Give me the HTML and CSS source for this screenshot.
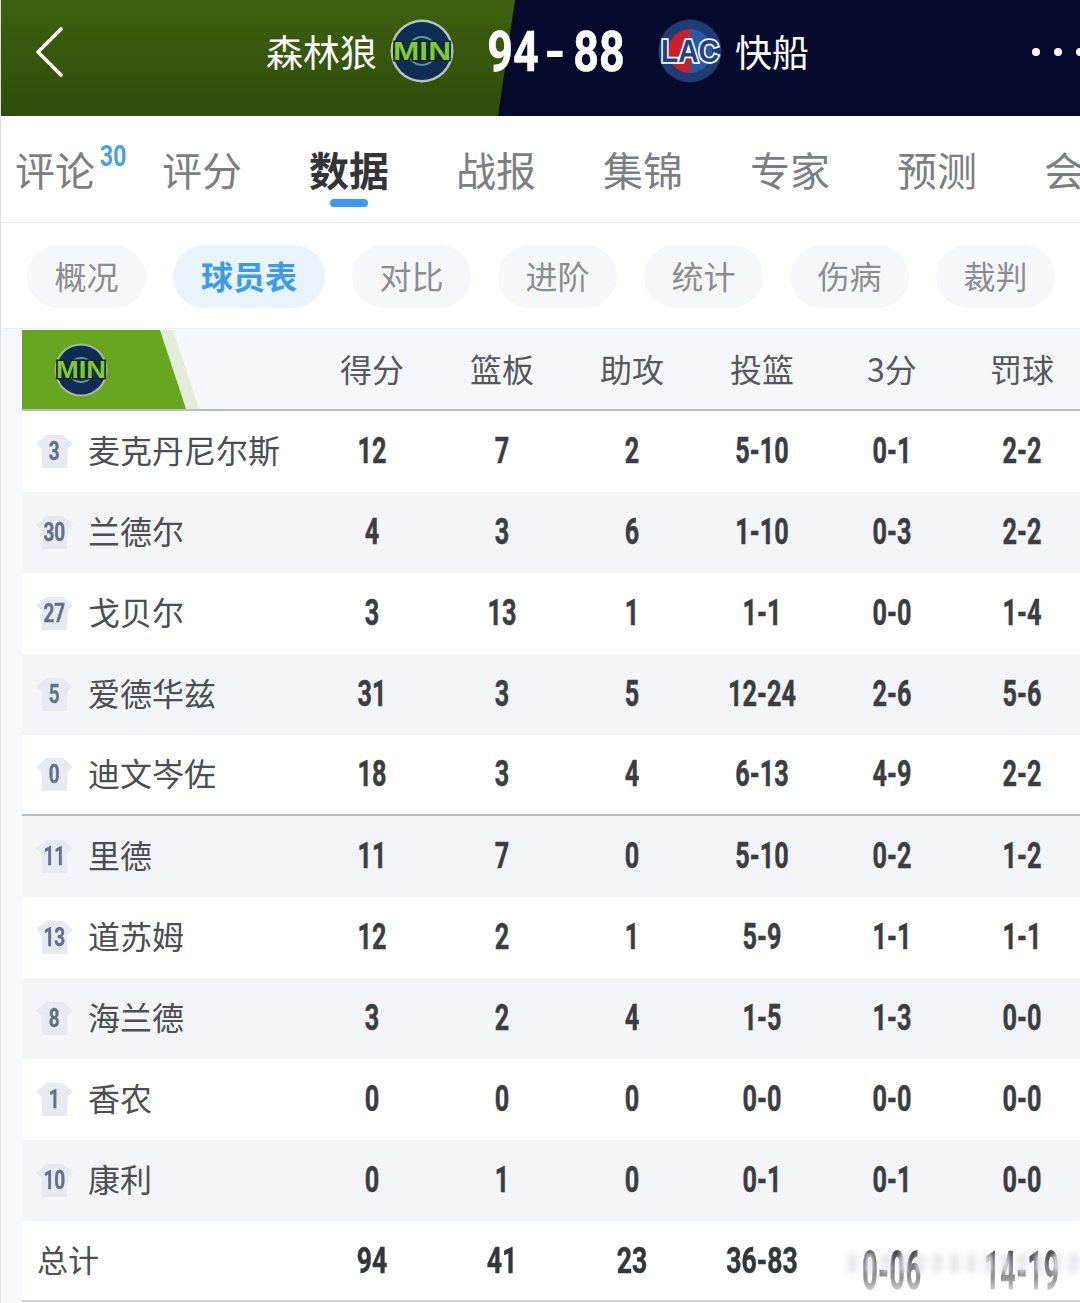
FILE: index.html
```html
<!DOCTYPE html>
<html lang="zh">
<head>
<meta charset="utf-8">
<title>森林狼 94-88 快船</title>
<link rel="stylesheet" href="styles.css">
</head>
<body>
<div class="page">
  <header class="hero">
    <svg class="back" viewBox="0 0 28 50" width="28" height="50"><path d="M26 2 L3 25 L26 48" fill="none" stroke="#fff" stroke-width="3.6" stroke-linecap="round" stroke-linejoin="round"/></svg>
    <span class="team team-home">森林狼</span>
    <svg class="logo logo-home" viewBox="0 0 64 64" width="64" height="64">
      <circle cx="32" cy="32" r="31.5" fill="#b9c3bd"/><circle cx="32" cy="32" r="29" fill="#0e2d55"/><circle cx="32" cy="32" r="14" fill="none" stroke="#5d9aa0" stroke-width="2"/>
      <text x="32" y="41" text-anchor="middle" textLength="58" lengthAdjust="spacingAndGlyphs" class="logo-min">MIN</text>
    </svg>
    <div class="score"><span class="digits">94</span><span class="dash">-</span><span class="digits">88</span></div>
    <svg class="logo logo-away" viewBox="0 0 64 64" width="64" height="64">
      <circle cx="32" cy="32" r="31.5" fill="#1f3c74"/><path d="M32 10 A22 22 0 0 0 32 54Z" fill="#c8202f"/><path d="M32 10 A22 22 0 0 1 32 54Z" fill="#2b5aa5"/>
      <text x="32" y="43" text-anchor="middle" textLength="58" lengthAdjust="spacingAndGlyphs" class="logo-lac">LAC</text>
    </svg>
    <span class="team team-away">快船</span>
    <div class="dots"><i></i><i></i><i></i></div>
  </header>

  <nav class="tabs">
    <span class="tab tab-sup">评论<sup class="count">30</sup></span>
    <span class="tab">评分</span>
    <span class="tab tab-on">数据</span>
    <span class="tab">战报</span>
    <span class="tab">集锦</span>
    <span class="tab">专家</span>
    <span class="tab">预测</span>
    <span class="tab">会员</span>
  </nav>

  <nav class="pills">
    <span class="pill">概况</span>
    <span class="pill pill-on">球员表</span>
    <span class="pill">对比</span>
    <span class="pill">进阶</span>
    <span class="pill">统计</span>
    <span class="pill">伤病</span>
    <span class="pill">裁判</span>
  </nav>

  <section class="board">
    <div class="row head">
      <div class="flag">
        <svg viewBox="0 0 54 54" width="54" height="54">
          <circle cx="27" cy="27" r="26.5" fill="#a9bca0"/><circle cx="27" cy="27" r="24.5" fill="#0e2d55"/><circle cx="27" cy="27" r="12" fill="none" stroke="#5d9aa0" stroke-width="2"/>
          <text x="27" y="35" text-anchor="middle" textLength="50" lengthAdjust="spacingAndGlyphs" class="logo-min small">MIN</text>
        </svg>
      </div>
      <div class="cell">得分</div><div class="cell">篮板</div><div class="cell">助攻</div><div class="cell">投篮</div><div class="cell">3分</div><div class="cell">罚球</div>
    </div>

    <div class="row"><div class="who"><span class="shirt"><b>3</b></span>麦克丹尼尔斯</div><div class="cell num">12</div><div class="cell num">7</div><div class="cell num">2</div><div class="cell num">5-10</div><div class="cell num">0-1</div><div class="cell num">2-2</div></div>
    <div class="row alt"><div class="who"><span class="shirt"><b>30</b></span>兰德尔</div><div class="cell num">4</div><div class="cell num">3</div><div class="cell num">6</div><div class="cell num">1-10</div><div class="cell num">0-3</div><div class="cell num">2-2</div></div>
    <div class="row"><div class="who"><span class="shirt"><b>27</b></span>戈贝尔</div><div class="cell num">3</div><div class="cell num">13</div><div class="cell num">1</div><div class="cell num">1-1</div><div class="cell num">0-0</div><div class="cell num">1-4</div></div>
    <div class="row alt"><div class="who"><span class="shirt"><b>5</b></span>爱德华兹</div><div class="cell num">31</div><div class="cell num">3</div><div class="cell num">5</div><div class="cell num">12-24</div><div class="cell num">2-6</div><div class="cell num">5-6</div></div>
    <div class="row last-starter"><div class="who"><span class="shirt"><b>0</b></span>迪文岑佐</div><div class="cell num">18</div><div class="cell num">3</div><div class="cell num">4</div><div class="cell num">6-13</div><div class="cell num">4-9</div><div class="cell num">2-2</div></div>
    <div class="row alt"><div class="who"><span class="shirt"><b>11</b></span>里德</div><div class="cell num">11</div><div class="cell num">7</div><div class="cell num">0</div><div class="cell num">5-10</div><div class="cell num">0-2</div><div class="cell num">1-2</div></div>
    <div class="row"><div class="who"><span class="shirt"><b>13</b></span>道苏姆</div><div class="cell num">12</div><div class="cell num">2</div><div class="cell num">1</div><div class="cell num">5-9</div><div class="cell num">1-1</div><div class="cell num">1-1</div></div>
    <div class="row alt"><div class="who"><span class="shirt"><b>8</b></span>海兰德</div><div class="cell num">3</div><div class="cell num">2</div><div class="cell num">4</div><div class="cell num">1-5</div><div class="cell num">1-3</div><div class="cell num">0-0</div></div>
    <div class="row"><div class="who"><span class="shirt"><b>1</b></span>香农</div><div class="cell num">0</div><div class="cell num">0</div><div class="cell num">0</div><div class="cell num">0-0</div><div class="cell num">0-0</div><div class="cell num">0-0</div></div>
    <div class="row alt"><div class="who"><span class="shirt"><b>10</b></span>康利</div><div class="cell num">0</div><div class="cell num">1</div><div class="cell num">0</div><div class="cell num">0-1</div><div class="cell num">0-1</div><div class="cell num">0-0</div></div>
    <div class="row total"><div class="who who-total">总计</div><div class="cell num strong">94</div><div class="cell num strong">41</div><div class="cell num strong">23</div><div class="cell num strong">36-83</div><div class="cell num strong fade">0-06</div><div class="cell num strong fade">14-19</div></div>
    <div class="mark"><i></i><i></i><i></i><i></i><i></i><i></i><i></i><i></i><i></i><i></i><i></i><i></i><i></i><i></i><i></i></div>
  </section>
</div>
</body>
</html>
```
FILE: styles.css
```css
* { box-sizing: border-box; }
html, body { margin: 0; padding: 0; background: #fff; }
body { font-family: "Noto Sans CJK SC", "Noto Sans", sans-serif; }
.page { position: relative; width: 1080px; height: 1303px; overflow: hidden; border-left: 1px solid #dcdde0; }

.hero { position: relative; height: 116px; margin-left: -1px; padding-bottom: 12px; display: flex; align-items: center; background: #050a2c; color: #fff; overflow: hidden; }
.hero::before { content: ""; position: absolute; inset: 0; background: linear-gradient(#3e6110, #2f4d0a); clip-path: polygon(0 0, 515px 0, 498px 100%, 0 100%); }
.hero > * { position: relative; flex: none; }
.back { margin-left: 35px; }
.team { font-size: 37px; line-height: 50px; font-weight: 400; margin-top: -2px; }
.team-home { margin-left: 203px; }
.logo-home { margin-left: 13px; margin-top: -2px; }
.logo-away { margin-top: -2px; }
.team-away { margin-left: 13px; }
.logo-min { font: 700 26px "Liberation Sans", sans-serif; fill: #84c63f; stroke: #0d2a1e; stroke-width: 3px; paint-order: stroke; }
.logo-min.small { font-size: 23px; stroke-width: 3px; }
.logo-lac { font: 700 31px "Liberation Sans", sans-serif; fill: #1f4486; stroke: #fff; stroke-width: 3.5px; paint-order: stroke; }
.score { width: 136px; margin: 0 35px 0 33px; display: flex; align-items: center; font: 700 56px/60px Roboto, "Liberation Sans", sans-serif; }
.digits { flex: none; width: 62px; margin: 0 -6px; text-align: center; transform: scaleX(.8); white-space: nowrap; -webkit-text-stroke: .6px #fff; }
.dash { flex: 1; text-align: center; }
.dots { margin-left: auto; width: 48px; display: flex; gap: 14px; }
.dots i { flex: none; width: 8px; height: 8px; border-radius: 50%; background: #fff; }

.tabs { position: relative; height: 107px; padding: 24px 0 0 14px; display: flex; gap: 67px; border-bottom: 1px solid #e9eaec; overflow: hidden; white-space: nowrap; }
.tab { position: relative; flex: none; font-size: 40px; line-height: 58px; font-weight: 400; color: #7b7e83; }
.tab-on { font-weight: 700; color: #333538; }
.tab-on::after { content: ""; position: absolute; left: 21px; top: 59px; width: 38px; height: 8px; border-radius: 4px; background: #3d9be9; }
.count { position: absolute; left: 85px; top: 1px; font: 700 29px/30px Roboto, sans-serif; color: #4a9fe6; transform: scaleX(.8); transform-origin: 0 50%; }

.pills { height: 106px; padding: 22px 0 0 26px; display: flex; gap: 27px; border-bottom: 1px solid #eeeff1; }
.pill { flex: none; height: 63px; padding: 0 27.5px; border-radius: 32px; background: #f6f7f9; color: #8a8d92; font-size: 32px; font-weight: 400; line-height: 60px; }
.pill-on { padding: 0 28px; background: #e8f3fc; color: #3d9be9; font-weight: 700; }

.board { position: relative; padding-left: 21px; padding-top: 1px; background: #f7f8fb; height: 975px; }
.row { display: grid; grid-template-columns: 285px repeat(6, 130px); align-items: center; height: 81px; background: #fff; color: #3a3d42; width: 1065px; }
.row.alt { background: #f3f5f9; }
.head { position: relative; height: 81px; background: #f6f7fb; border-bottom: 2px solid #b9bcc2; }
.head::before { content: ""; position: absolute; left: 0; top: 0; width: 177px; height: 79px; background: #e3edd9; clip-path: polygon(0 0, 151px 0, 177px 100%, 0 100%); }
.flag { position: relative; align-self: start; height: 79px; background: #67a51e; width: 164px; padding: 13px 0 0 32px; clip-path: polygon(0 0, 138px 0, 164px 100%, 0 100%); }
.flag svg { display: block; }
.cell { text-align: center; font-size: 32px; font-weight: 400; color: #55585d; padding-bottom: 4px; }
.num { padding-bottom: 0; font: 700 36px/40px Roboto, "Liberation Sans", sans-serif; color: #3a3d42; transform: translateY(-1px) scaleX(.7); white-space: nowrap; -webkit-text-stroke: .5px #3a3d42; }
.strong { color: #33363a; transform: scaleX(.74); }
.fade { -webkit-mask-image: linear-gradient(#000 30%, transparent 100%); mask-image: linear-gradient(#000 30%, transparent 100%); letter-spacing: 1px; transform: scale(.74, 1.5); transform-origin: 50% 0; }
.who { display: flex; align-items: center; gap: 15px; padding: 0 0 6px 14px; font-size: 32px; font-weight: 400; color: #4b4e53; white-space: nowrap; }
.who-total { font-size: 31px; padding: 0 0 4px 15px; }
.shirt { flex: none; width: 37px; height: 33px; margin-top: 6px; display: flex; justify-content: center; align-items: center; padding-top: 1px; background: #e7eaf0; clip-path: polygon(28% 0, 72% 0, 100% 26%, 85% 42%, 84% 100%, 16% 100%, 15% 42%, 0 26%); }
.shirt b { display: block; color: #66708a; font: 700 25px/32px Roboto, sans-serif; transform: scaleX(.76); -webkit-text-stroke: .4px #66708a; }
.last-starter { border-bottom: 2px solid #b9bcc2; }
.total { background: #fff; border-bottom: 2px solid #cfd1d4; }
.mark { position: absolute; left: 830px; top: 924px; width: 250px; height: 20px; display: flex; gap: 8px; filter: blur(3px); }
.mark i { flex: none; width: 9px; height: 20px; background: #e6e7e9; }
.mark i:nth-child(1) { background: #fff; }
```
